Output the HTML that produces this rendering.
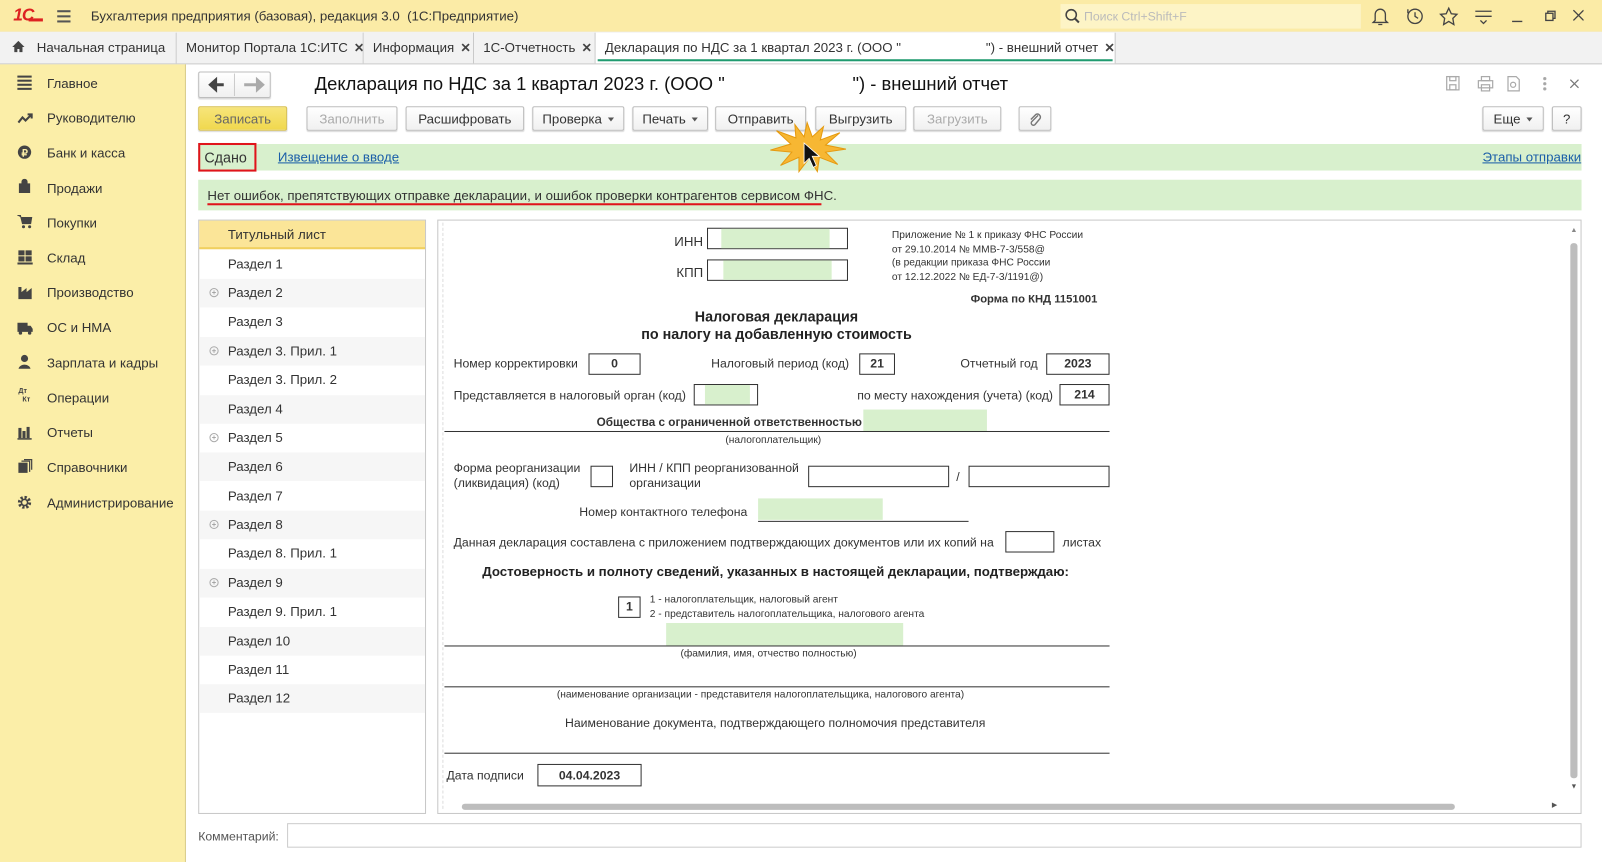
<!DOCTYPE html>
<html><head><meta charset="utf-8">
<style>
html,body{margin:0;padding:0;width:1602px;height:862px;overflow:hidden;background:#fff}
#w{position:absolute;left:0;top:0;width:1568px;height:844px;transform:scale(1.02168,1.0213);transform-origin:0 0;font-family:"Liberation Sans",Arial,sans-serif;font-size:13px;color:#333}
.a{position:absolute;white-space:pre}
.btn{position:absolute;height:24px;border:1px solid #bdbdbd;border-radius:2px;background:linear-gradient(#fff,#f0f0f0);box-shadow:0 1px 1px rgba(0,0,0,.15);text-align:center;line-height:24px;font-size:13px;color:#333;box-sizing:border-box;white-space:nowrap}
.dis{color:#aaa}
.dd:after{content:"";display:inline-block;margin-left:6px;border:3px solid transparent;border-top:4px solid #555;vertical-align:-1px}
.tab{position:absolute;top:32px;height:30px;line-height:29px;border-right:1px solid #c8c8c8;padding-left:9px;box-sizing:border-box;font-size:13px;color:#333;background:#f2f2f2;white-space:pre;overflow:hidden}
.x{font-weight:bold;color:#444;margin-left:6px;font-size:12px}
.nav{position:absolute;left:46px;font-size:13px;color:#333;white-space:nowrap}
.ic{position:absolute;left:17px;width:16px;height:14px}
.li{position:absolute;left:195px;width:221px;height:28px;line-height:28px;padding-left:28px;box-sizing:border-box;font-size:13px;color:#333}
.li.g{background:#f6f6f6}
.pl{position:absolute;left:10px;top:9px;width:7px;height:7px;border:1px solid #aaa;border-radius:50%;font-size:8px;line-height:7px;text-align:center;color:#888}
.f{font-size:12px;color:#333}
.box{position:absolute;border:1px solid #333;background:#fff;box-sizing:border-box;text-align:center;font-weight:bold;font-size:12px}
.gr{position:absolute;background:#d8f0cd}
.hl{position:absolute;height:1px;background:#333}
</style></head><body><div id="w">
<!-- top bar -->
<div class="a" style="left:0;top:0;width:1568px;height:31px;background:#fbeba6;border-bottom:1px solid #e3d78f"></div>
<div class="a" style="left:13px;top:5px;font-weight:bold;font-size:17px;color:#d22;letter-spacing:-1px;font-style:italic">1С</div>
<div class="a" style="left:28px;top:18px;width:14px;height:3px;background:#d22"></div>
<div class="a" style="left:56px;top:10px;width:13px;height:2px;background:#555;box-shadow:0 5px 0 #555,0 10px 0 #555"></div>
<div class="a" style="left:89px;top:8px;font-size:13px;color:#333">Бухгалтерия предприятия (базовая), редакция 3.0  (1С:Предприятие)</div>
<div class="a" style="left:1038px;top:4px;width:294px;height:24px;background:#fdf4c6"></div>
<svg class="a" style="left:1042px;top:8px" width="16" height="16"><circle cx="6.5" cy="6.5" r="5" fill="none" stroke="#444" stroke-width="1.5"/><line x1="10" y1="10" x2="14" y2="14" stroke="#444" stroke-width="2"/></svg>
<div class="a" style="left:1061px;top:9px;font-size:12px;color:#bbb">Поиск Ctrl+Shift+F</div>
<svg class="a" style="left:1340px;top:6px" width="210" height="20" fill="none" stroke="#444" stroke-width="1.3">
<path d="M6 14 V8 a5 5 0 0 1 10 0 V14 L18 16 H4 Z M9 18 h4"/>
<circle cx="45" cy="10" r="7"/><path d="M45 6 V10 L48 12 M38 7 L38 3"/>
<path d="M78 2 L80.5 7.5 86 8 82 12 83 18 78 15 73 18 74 12 70 8 75.5 7.5 Z"/>
<path d="M104 5 H120 M104 10 H120 M109 14 L112 17 115 14"/>
<path d="M140 15 H150"/>
<rect x="173" y="7" width="7" height="7"/><path d="M175 7 V5 H182 V12 H180"/>
<path d="M200 4 L210 14 M210 4 L200 14"/>
</svg>
<!-- tabs -->
<div class="a" style="left:0;top:31px;width:1568px;height:31px;background:#f2f2f2;border-bottom:1px solid #c8c8c8"></div>
<div class="tab" style="left:0;width:173px;padding-left:36px">Начальная страница</div>
<svg class="a" style="left:11px;top:39px" width="14" height="13"><path d="M7 1 L1 7 H3 V12 H6 V9 H8 V12 H11 V7 H13 Z" fill="#444"/></svg>
<div class="tab" style="left:173px;width:183px">Монитор Портала 1С:ИТС<span class="x">✕</span></div>
<div class="tab" style="left:356px;width:108px">Информация<span class="x">✕</span></div>
<div class="tab" style="left:464px;width:119px">1С-Отчетность<span class="x">✕</span></div>
<div class="tab" style="left:583px;width:509px;background:#fff">Декларация по НДС за 1 квартал 2023 г. (ООО "                       ") - внешний отчет<span class="x">✕</span></div>
<div class="a" style="left:585px;top:58px;width:504px;height:2px;background:#1f9a6f"></div>
<!-- sidebar -->
<div class="a" style="left:0;top:63px;width:181px;height:781px;background:#fbeea8;border-right:1px solid #d8cc8c"></div>
<div class="ic" style="top:74px"><div style="width:14px;height:2px;background:#444;box-shadow:0 4px 0 #444,0 8px 0 #444,0 12px 0 #444"></div></div>
<div class="nav" style="top:74px">Главное</div>
<svg class="ic" style="top:109px"><path d="M1 11 L5 6 8 9 13 4 M10 3 H14 V7" fill="none" stroke="#444" stroke-width="2"/></svg>
<div class="nav" style="top:108px">Руководителю</div>
<svg class="ic" style="top:142px"><circle cx="7" cy="7" r="6.5" fill="#444"/><text x="4" y="11" font-size="10" fill="#fbeea8" font-weight="bold">₽</text></svg>
<div class="nav" style="top:142px">Банк и касса</div>
<svg class="ic" style="top:175px" height="16"><path d="M2 5 H12 V15 H2 Z M4.5 5 V3 a2.5 2.5 0 0 1 5 0 V5" fill="#444" stroke="#444"/></svg>
<div class="nav" style="top:177px">Продажи</div>
<svg class="ic" style="top:210px"><path d="M0 1 H3 L5 9 H13 L14 3 H4" fill="#444" stroke="#444"/><circle cx="6" cy="12" r="1.5" fill="#444"/><circle cx="12" cy="12" r="1.5" fill="#444"/></svg>
<div class="nav" style="top:211px">Покупки</div>
<svg class="ic" style="top:245px"><rect x="1" y="0" width="6" height="5" fill="#444"/><rect x="8" y="0" width="6" height="5" fill="#444"/><rect x="1" y="6" width="6" height="5" fill="#444"/><rect x="8" y="6" width="6" height="5" fill="#444"/><rect x="0" y="12" width="15" height="2" fill="#444"/></svg>
<div class="nav" style="top:245px">Склад</div>
<svg class="ic" style="top:279px"><path d="M1 14 V2 H4 V7 L9 3 V7 L14 3 V14 Z" fill="#444"/></svg>
<div class="nav" style="top:279px">Производство</div>
<svg class="ic" style="top:314px"><path d="M0 2 H10 V5 H13 L15 8 V11 H0 Z" fill="#444"/><circle cx="3" cy="12" r="1.7" fill="#444"/><circle cx="12" cy="12" r="1.7" fill="#444"/></svg>
<div class="nav" style="top:313px">ОС и НМА</div>
<svg class="ic" style="top:347px" height="16"><circle cx="7" cy="4" r="3.5" fill="#444"/><path d="M1 15 a6 5 0 0 1 12 0 Z" fill="#444"/></svg>
<div class="nav" style="top:348px">Зарплата и кадры</div>
<div class="a" style="left:18px;top:380px;font-size:7px;font-weight:bold;color:#444;line-height:8px">Дт
  Кт</div>
<div class="nav" style="top:382px">Операции</div>
<svg class="ic" style="top:417px"><rect x="1" y="2" width="3" height="10" fill="#444"/><rect x="5" y="5" width="3" height="7" fill="#444"/><rect x="9" y="1" width="3" height="11" fill="#444"/><rect x="0" y="12" width="14" height="1.5" fill="#444"/></svg>
<div class="nav" style="top:416px">Отчеты</div>
<svg class="ic" style="top:449px" height="16"><rect x="1" y="4" width="9" height="11" fill="#444"/><path d="M4 2.5 H12 V13 M6.5 1 H14 V11" fill="none" stroke="#444" stroke-width="1.2"/></svg>
<div class="nav" style="top:450px">Справочники</div>
<svg class="ic" style="top:484px" height="16"><circle cx="7" cy="8" r="5" fill="none" stroke="#444" stroke-width="3" stroke-dasharray="2.2 1.7"/><circle cx="7" cy="8" r="3" fill="none" stroke="#444" stroke-width="1.5"/></svg>
<div class="nav" style="top:485px">Администрирование</div>
<!-- nav arrows -->
<div class="btn" style="left:194px;top:70px;width:71px;height:26px"></div>
<div class="a" style="left:229px;top:72px;width:1px;height:22px;background:#ccc"></div>
<svg class="a" style="left:203px;top:75px" width="60" height="16"><path d="M3 8 H16 M3 8 L8 3.5 V12.5 Z" stroke="#444" stroke-width="3" fill="#444"/><path d="M36 8 H49 M54 8 L49 3.5 V12.5 Z" stroke="#aaa" stroke-width="3" fill="#aaa"/></svg>
<div class="a" style="left:308px;top:72px;font-size:18px;color:#111">Декларация по НДС за 1 квартал 2023 г. (ООО "                         ") - внешний отчет</div>
<svg class="a" style="left:1414px;top:73px" width="140" height="18" fill="none" stroke="#aaa" stroke-width="1.2"><rect x="2" y="2" width="12" height="13"/><rect x="5" y="2" width="6" height="4"/><rect x="5" y="10" width="6" height="5"/>
<rect x="33" y="6" width="14" height="7"/><rect x="36" y="2" width="8" height="4"/><rect x="36" y="10" width="8" height="6"/>
<path d="M62 2 H70 L73 5 V16 H62 Z"/><circle cx="67" cy="10" r="2.5"/>
<circle cx="98" cy="4" r="1" fill="#999"/><circle cx="98" cy="9" r="1" fill="#999"/><circle cx="98" cy="14" r="1" fill="#999"/>
<path d="M123 5 L131 13 M131 5 L123 13" stroke="#777"/></svg>
<!-- toolbar -->
<div class="btn" style="left:194px;top:104px;width:87px;background:linear-gradient(#f7e57a,#f0d84e);border-color:#d7c053;color:#666">Записать</div>
<div class="btn dis" style="left:300px;top:104px;width:89px">Заполнить</div>
<div class="btn" style="left:397px;top:104px;width:116px">Расшифровать</div>
<div class="btn dd" style="left:521px;top:104px;width:90px">Проверка</div>
<div class="btn dd" style="left:619px;top:104px;width:74px">Печать</div>
<div class="btn" style="left:700px;top:104px;width:89px">Отправить</div>
<div class="btn" style="left:798px;top:104px;width:89px">Выгрузить</div>
<div class="btn dis" style="left:894px;top:104px;width:86px">Загрузить</div>
<div class="btn" style="left:997px;top:104px;width:32px"><svg width="14" height="16" style="margin-top:4px"><path d="M10 4 L4 10 a2 2 0 0 0 3 3 L12 7 a3 3 0 0 0 -4 -4 L3 8" fill="none" stroke="#777" stroke-width="1.4"/></svg></div>
<div class="btn dd" style="left:1451px;top:104px;width:60px">Еще</div>
<div class="btn" style="left:1519px;top:104px;width:29px">?</div>
<!-- green bars -->
<div class="a" style="left:194px;top:141px;width:1354px;height:26px;background:#d8f0cd"></div>
<div class="a" style="left:194px;top:140px;width:57px;height:28px;border:2px solid #e0141b;box-sizing:border-box;background:#d8f0cd;font-size:14px;line-height:24px;padding-left:4px;color:#333">Сдано</div>
<div class="a" style="left:272px;top:146px;color:#1a5ea8;text-decoration:underline;font-size:13px">Извещение о вводе</div>
<div class="a" style="left:1451px;top:146px;color:#1a5ea8;text-decoration:underline;font-size:13px">Этапы отправки</div>
<div class="a" style="left:194px;top:176px;width:1354px;height:30px;background:#d8f0cd"></div>
<div class="a" style="left:203px;top:184px;font-size:13px;color:#333">Нет ошибок, препятствующих отправке декларации, и ошибок проверки контрагентов сервисом ФНС.</div>
<div class="a" style="left:203px;top:199px;width:601px;height:2px;background:#e0141b"></div>
<!-- starburst -->
<svg class="a" style="left:750px;top:118px" width="80" height="52"><path d="M40 2 L45 16 56 6 53 19 72 12 58 24 78 28 58 31 70 43 52 36 50 50 42 37 32 50 32 36 14 44 25 31 4 29 24 23 10 10 29 17 28 4 37 16 Z" fill="#f7b733" stroke="#e59a10"/><path d="M37 22 L37 42 42 37 46 46 49 44 45 35 52 35 Z" fill="#111" stroke="#fff" stroke-width=".8"/></svg>
<!-- left list -->
<div class="a" style="left:194px;top:215px;width:223px;height:582px;border:1px solid #c8c8c8;box-sizing:border-box"></div>
<div class="li" style="top:216px;background:#fbe598;border-bottom:2px solid #f0d060">Титульный лист</div>
<div class="li" style="top:245px">Раздел 1</div>
<div class="li g" style="top:273px"><span class="pl">+</span>Раздел 2</div>
<div class="li" style="top:301px">Раздел 3</div>
<div class="li g" style="top:330px"><span class="pl">+</span>Раздел 3. Прил. 1</div>
<div class="li" style="top:358px">Раздел 3. Прил. 2</div>
<div class="li g" style="top:387px">Раздел 4</div>
<div class="li" style="top:415px"><span class="pl">+</span>Раздел 5</div>
<div class="li g" style="top:443px">Раздел 6</div>
<div class="li" style="top:472px">Раздел 7</div>
<div class="li g" style="top:500px"><span class="pl">+</span>Раздел 8</div>
<div class="li" style="top:528px">Раздел 8. Прил. 1</div>
<div class="li g" style="top:557px"><span class="pl">+</span>Раздел 9</div>
<div class="li" style="top:585px">Раздел 9. Прил. 1</div>
<div class="li g" style="top:614px">Раздел 10</div>
<div class="li" style="top:642px">Раздел 11</div>
<div class="li g" style="top:670px">Раздел 12</div>
<!-- report area -->
<div class="a" style="left:428px;top:215px;width:1120px;height:582px;border:1px solid #c8c8c8;box-sizing:border-box"></div>
<div class="a" style="left:433px;top:218px;width:0;height:574px;border-left:1px dashed #ddd"></div>
<div class="a" style="left:1537px;top:238px;width:7px;height:524px;background:#bdbdbd;border-radius:3px"></div>
<div class="a" style="left:1537px;top:222px;font-size:7px;color:#888">▲</div>
<div class="a" style="left:1537px;top:767px;font-size:7px;color:#555">▼</div>
<div class="a" style="left:452px;top:787px;width:972px;height:6px;background:#bdbdbd;border-radius:3px"></div>
<div class="a" style="left:1519px;top:784px;font-size:7px;color:#555">▶</div>
<!-- form -->
<div class="a f" style="left:660px;top:229px;font-size:13px">ИНН</div>
<div class="box" style="left:692px;top:223px;width:138px;height:21px"></div><div class="gr" style="left:706px;top:224px;width:106px;height:19px"></div>
<div class="a f" style="left:662px;top:259px;font-size:13px">КПП</div>
<div class="box" style="left:692px;top:254px;width:138px;height:21px"></div><div class="gr" style="left:708px;top:255px;width:106px;height:19px"></div>
<div class="a" style="left:873px;top:224px;font-size:10px;line-height:13.7px;color:#333">Приложение № 1 к приказу ФНС России
от 29.10.2014 № ММВ-7-3/558@
(в редакции приказа ФНС России
от 12.12.2022 № ЕД-7-3/1191@)</div>
<div class="a" style="left:950px;top:287px;font-size:11px;font-weight:bold">Форма по КНД 1151001</div>
<div class="a" style="left:600px;top:302px;width:320px;text-align:center;font-size:14px;font-weight:bold;line-height:17px;color:#222;white-space:normal">Налоговая декларация<br>по налогу на добавленную стоимость</div>
<div class="a f" style="left:444px;top:349px">Номер корректировки</div>
<div class="box" style="left:576px;top:346px;width:51px;height:21px;line-height:19px">0</div>
<div class="a f" style="left:696px;top:349px">Налоговый период (код)</div>
<div class="box" style="left:841px;top:346px;width:35px;height:21px;line-height:19px">21</div>
<div class="a f" style="left:940px;top:349px">Отчетный год</div>
<div class="box" style="left:1024px;top:346px;width:62px;height:21px;line-height:19px">2023</div>
<div class="a f" style="left:444px;top:380px">Представляется в налоговый орган (код)</div>
<div class="box" style="left:679px;top:376px;width:63px;height:21px"></div><div class="gr" style="left:690px;top:377px;width:44px;height:19px"></div>
<div class="a f" style="left:839px;top:380px">по месту нахождения (учета) (код)</div>
<div class="box" style="left:1037px;top:376px;width:49px;height:21px;line-height:19px">214</div>
<div class="gr" style="left:845px;top:401px;width:121px;height:21px"></div>
<div class="a f" style="left:584px;top:408px;font-weight:bold;font-size:11.5px">Общества с ограниченной ответственностью</div>
<div class="hl" style="left:435px;top:422px;width:651px"></div>
<div class="a" style="left:710px;top:426px;font-size:10px">(налогоплательщик)</div>
<div class="a f" style="left:444px;top:451px;line-height:15px">Форма реорганизации
(ликвидация) (код)</div>
<div class="box" style="left:578px;top:456px;width:22px;height:21px"></div>
<div class="a f" style="left:616px;top:451px;line-height:15px">ИНН / КПП реорганизованной
организации</div>
<div class="box" style="left:791px;top:456px;width:138px;height:21px"></div>
<div class="a f" style="left:936px;top:460px">/</div>
<div class="box" style="left:948px;top:456px;width:138px;height:21px"></div>
<div class="a f" style="left:567px;top:494px">Номер контактного телефона</div>
<div class="gr" style="left:742px;top:488px;width:122px;height:21px"></div>
<div class="hl" style="left:742px;top:510px;width:206px"></div>
<div class="a f" style="left:444px;top:524px">Данная декларация составлена с приложением подтверждающих документов или их копий на</div>
<div class="box" style="left:984px;top:520px;width:48px;height:21px"></div>
<div class="a f" style="left:1040px;top:524px">листах</div>
<div class="a" style="left:472px;top:552px;font-size:13px;font-weight:bold;color:#222">Достоверность и полноту сведений, указанных в настоящей декларации, подтверждаю:</div>
<div class="box" style="left:605px;top:584px;width:22px;height:21px;line-height:19px">1</div>
<div class="a" style="left:636px;top:581px;font-size:10px;line-height:14px">1 - налогоплательщик, налоговый агент
2 - представитель налогоплательщика, налогового агента</div>
<div class="gr" style="left:652px;top:610px;width:232px;height:22px"></div>
<div class="hl" style="left:435px;top:632px;width:651px"></div>
<div class="a" style="left:666px;top:635px;font-size:10px">(фамилия, имя, отчество полностью)</div>
<div class="hl" style="left:435px;top:672px;width:651px"></div>
<div class="a" style="left:545px;top:675px;font-size:10px">(наименование организации - представителя налогоплательщика, налогового агента)</div>
<div class="a f" style="left:553px;top:701px">Наименование документа, подтверждающего полномочия представителя</div>
<div class="hl" style="left:435px;top:737px;width:651px"></div>
<div class="a f" style="left:437px;top:752px">Дата подписи</div>
<div class="box" style="left:526px;top:748px;width:102px;height:22px;line-height:20px">04.04.2023</div>
<!-- comment -->
<div class="a" style="left:194px;top:812px;font-size:12px;color:#555">Комментарий:</div>
<div class="a" style="left:281px;top:806px;width:1267px;height:24px;border:1px solid #ccc;box-sizing:border-box"></div>
</div></body></html>
